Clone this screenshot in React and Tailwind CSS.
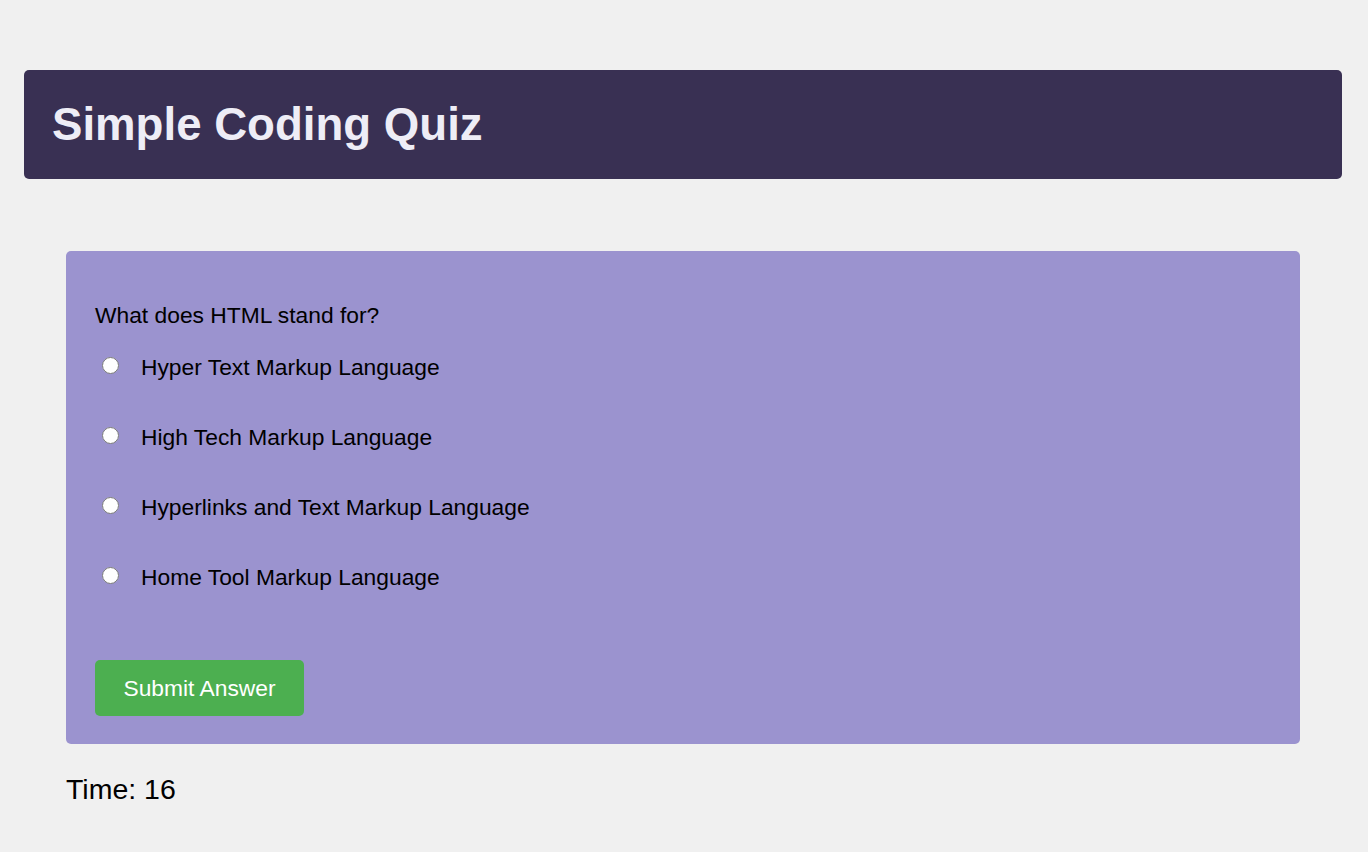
export default function App() {
  const options = [
    "Hyper Text Markup Language",
    "High Tech Markup Language",
    "Hyperlinks and Text Markup Language",
    "Home Tool Markup Language",
  ];
  return (
    <div
      className="min-h-[852px] w-full bg-[#f0f0f0] pt-[70px] pb-[40px] text-black"
      style={{ fontFamily: '"Liberation Sans", Arial, sans-serif' }}
    >
      <header className="ml-[24px] mr-[26px] flex h-[109px] items-center rounded-[5px] bg-[#393053] pl-[28px]">
        <h1 className="text-[45.6px] font-bold leading-none text-[#eeedf6]">Simple Coding Quiz</h1>
      </header>

      <main className="ml-[66px] mt-[72px] w-[1234px]">
        <div className="rounded-[5px] bg-[#9b93cf] px-[29px] pt-[51px] pb-[28px]">
          <p className="h-[26px] text-[22.8px] leading-[26px]">What does HTML stand for?</p>
          <div className="mt-[4px] flex flex-col">
            {options.map((o, i) => (
              <label key={i} className="flex h-[70px] items-center">
                <input
                  type="radio"
                  name="q"
                  className="m-0 mb-[3px] ml-[7px] mr-[22px] h-[17px] w-[17px]"
                />
                <span className="text-[22.8px] leading-[26px]">{o}</span>
              </label>
            ))}
          </div>
          <button className="mt-[48px] flex h-[56px] w-[209px] items-center justify-center rounded-[5px] bg-[#4caf50] text-[22.8px] text-white">
            Submit Answer
          </button>
        </div>
        <div className="mt-[29px] text-[28.5px] leading-[32px]">Time: 16</div>
      </main>
    </div>
  );
}
